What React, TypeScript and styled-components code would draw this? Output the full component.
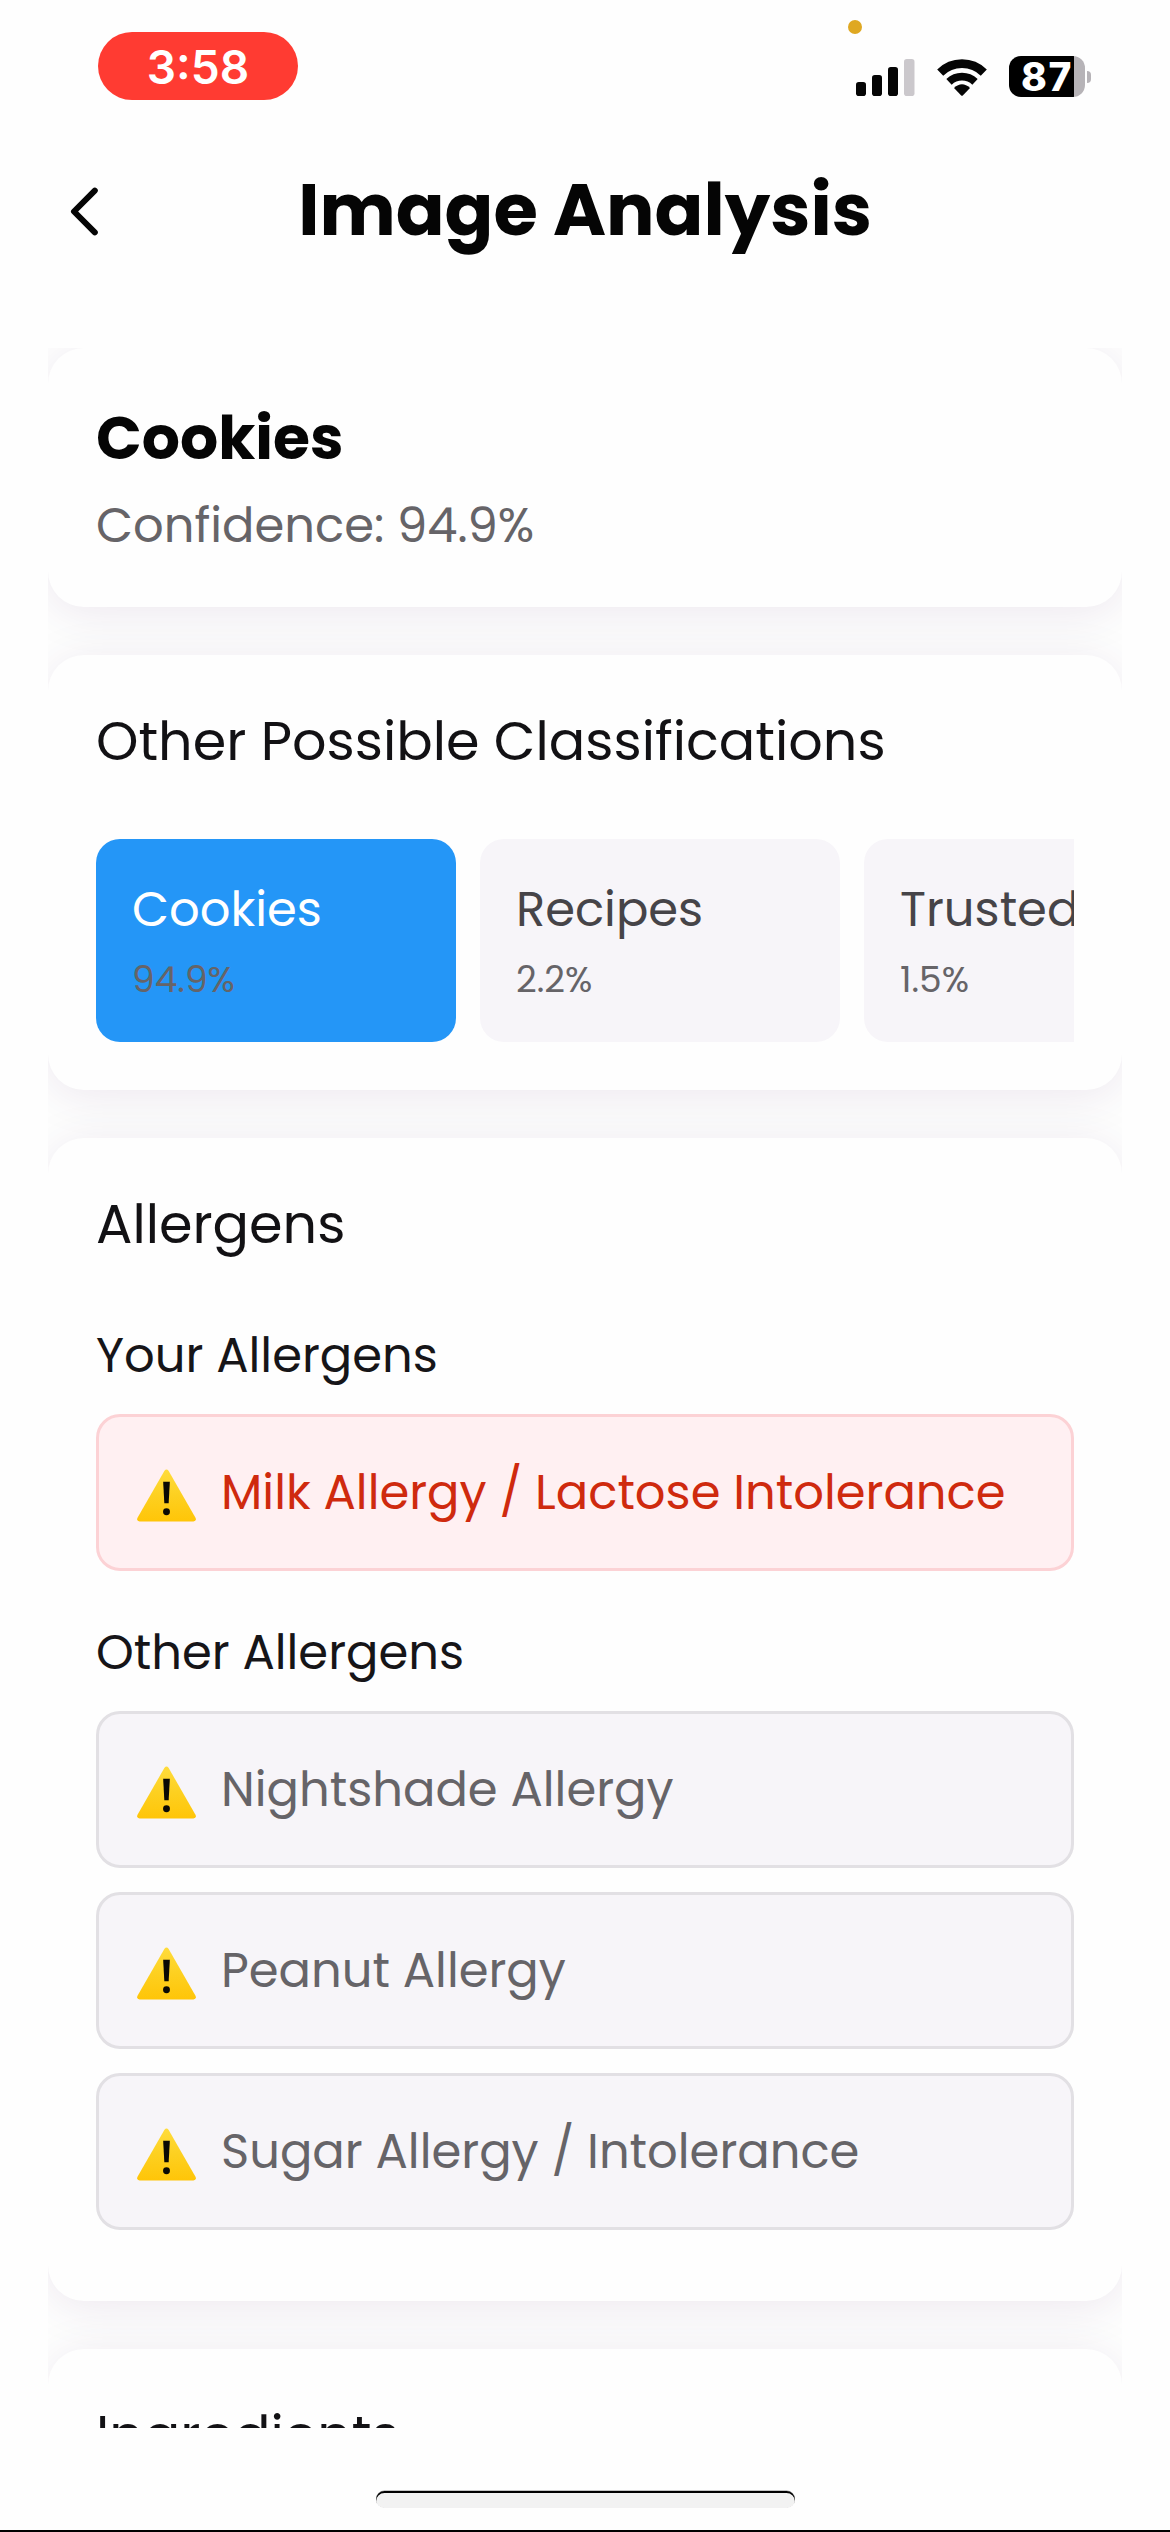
import React from "react";
import styled, { createGlobalStyle } from "styled-components";

const GlobalStyle = createGlobalStyle`
  * { box-sizing: border-box; }
  body {
    margin: 0;
    background: #fefefe;
    font-family: Poppins, Inter, "Open Sans", sans-serif;
    -webkit-font-smoothing: antialiased;
  }
`;

const Screen = styled.div`
  position: relative;
  display: flex;
  flex-direction: column;
  width: 1170px;
  height: 2532px;
  overflow: hidden;
  background: #fefefe;
`;

/* ---------- status bar ---------- */

const StatusBar = styled.div`
  display: flex;
  justify-content: space-between;
  align-items: flex-start;
  height: 130px;
  padding: 32px 79px 0 98px;
`;

const TimePill = styled.div`
  display: flex;
  align-items: center;
  justify-content: center;
  width: 200px;
  height: 68px;
  padding-top: 2px;
  border-radius: 34px;
  background: #ff3b32;
  color: #fff;
  font-family: Inter, sans-serif;
  font-size: 46px;
  font-weight: 600;
`;

const StatusIcons = styled.div`
  display: flex;
  align-items: flex-end;
  height: 65px;
`;

const SignalIcon = styled.svg`
  margin: 0 22px 1px 0;
`;

const WifiIcon = styled.svg`
  margin: 0 22px 1px 0;
`;

const Battery = styled.div`
  display: flex;
  align-items: center;
  gap: 2px;
`;

const BatteryBody = styled.div`
  display: flex;
  align-items: center;
  width: 76px;
  height: 41px;
  padding-left: 12px;
  border-radius: 12px;
  background: linear-gradient(90deg, #000 65px, #b6b3b7 65px);
  color: #fff;
  font-family: Inter, sans-serif;
  font-size: 39px;
  font-weight: 800;
  letter-spacing: 1.5px;
  line-height: 41px;
`;

const BatteryNub = styled.div`
  width: 4px;
  height: 12px;
  border-radius: 0 6px 6px 0;
  background: #b6b3b7;
`;

const MicDot = styled.div`
  position: absolute;
  left: 848px;
  top: 20px;
  width: 14px;
  height: 14px;
  border-radius: 50%;
  background: #dfa822;
`;

/* ---------- header ---------- */

const Header = styled.header`
  display: grid;
  grid-template-columns: 150px 1fr 150px;
  align-items: center;
  height: 160px;
  margin-bottom: 58px;
`;

const BackButton = styled.button`
  display: flex;
  padding: 2px 0 0 69px;
  border: 0;
  background: none;
`;

const ScreenTitle = styled.h1`
  margin: 0;
  text-align: center;
  font-size: 72px;
  font-weight: 700;
  line-height: 100px;
  color: #050505;
`;

/* ---------- scroll area and cards ---------- */

const ScrollArea = styled.main`
  display: flex;
  flex-direction: column;
  gap: 48px;
  height: 2080px;
  margin: 0 48px;
  overflow: hidden;
`;

const Card = styled.section<{ $height: number }>`
  flex: none;
  display: flex;
  flex-direction: column;
  height: ${(p) => p.$height}px;
  padding: 48px;
  border-radius: 36px;
  background: #fefefe;
  box-shadow: 0 6px 48px rgba(60, 10, 90, 0.095);
`;

const FoodName = styled.h2`
  margin: 0 0 11px;
  font-size: 60px;
  font-weight: 700;
  line-height: 84px;
  color: #050505;
`;

const Confidence = styled.p`
  margin: 0;
  font-size: 48px;
  line-height: 69px;
  color: #666468;
`;

const CardTitle = styled.h3`
  margin: 0;
  font-size: 54px;
  font-weight: 400;
  line-height: 76px;
  white-space: nowrap;
  color: #121114;
`;

const TileStrip = styled.div`
  display: flex;
  gap: 24px;
  margin-top: 60px;
  overflow: hidden;
`;

const Tile = styled.div<{ $active?: boolean }>`
  flex: none;
  width: 360px;
  height: 203px;
  padding: 36px;
  border-radius: 24px;
  background: ${(p) => (p.$active ? "#2496f7" : "#f7f5f9")};
  color: ${(p) => (p.$active ? "#fff" : "#464448")};
`;

const TileName = styled.div`
  font-size: 48px;
  line-height: 69px;
  white-space: nowrap;
`;

const TileScore = styled.div`
  margin-top: 9px;
  font-size: 36px;
  line-height: 54px;
  color: #666468;
`;

const Group = styled.div<{ $gap: number }>`
  display: flex;
  flex-direction: column;
  margin-top: ${(p) => p.$gap}px;
`;

const GroupTitle = styled.h4`
  margin: 0 0 22px;
  font-size: 48px;
  font-weight: 400;
  line-height: 72px;
  color: #161518;
`;

const AllergenList = styled.div`
  display: flex;
  flex-direction: column;
  gap: 24px;
`;

const AllergenRow = styled.div<{ $danger?: boolean }>`
  display: flex;
  align-items: center;
  gap: 24px;
  height: 157px;
  padding: 0 37px;
  border: 3px solid ${(p) => (p.$danger ? "#fcd2d5" : "#e2e0e4")};
  border-radius: 24px;
  background: ${(p) => (p.$danger ? "#fff0f2" : "#f7f5f9")};
  color: ${(p) => (p.$danger ? "#cf2a0e" : "#666468")};
  font-size: 48px;
  line-height: 72px;
  white-space: nowrap;
`;

const WarningSvg = styled.svg`
  flex: none;
  margin-top: 5px;
`;

/* ---------- bottom ---------- */

const Footer = styled.footer`
  display: flex;
  justify-content: center;
  height: 104px;
  padding-top: 63px;
  border-bottom: 2px solid #000;
`;

const HomeIndicator = styled.div`
  width: 419px;
  height: 17px;
  border-radius: 9px;
  background: #f2f2f2;
  box-shadow: inset 0 2px 0 #000, 0 -0.5px 0.5px #8a8a8a;
`;

function Signal() {
  return (
    <SignalIcon width="59" height="37" viewBox="0 0 59 37">
      <rect x="0" y="23" width="10" height="14" rx="2.8" fill="#050505" />
      <rect x="16" y="16" width="10" height="21" rx="2.8" fill="#050505" />
      <rect x="32" y="8" width="10" height="29" rx="2.8" fill="#050505" />
      <rect x="48" y="0" width="10.5" height="37" rx="2.8" fill="#cbc8cc" />
    </SignalIcon>
  );
}

function Wifi() {
  return (
    <WifiIcon width="50" height="37" viewBox="0 0 50 37" fill="none">
      <path d="M3.2 13.6A31 31 0 0 1 46.8 13.6" stroke="#050505" strokeWidth="8.6" />
      <path d="M12 22.8A19 19 0 0 1 38 22.8" stroke="#050505" strokeWidth="7.8" />
      <path d="M17 29Q25 21.5 33 29L25.8 36.4Q25 37.2 24.2 36.4Z" fill="#050505" />
    </WifiIcon>
  );
}

function Warning() {
  return (
    <WarningSvg width="61" height="53" viewBox="0 0 62 53">
      <defs>
        <linearGradient id="warn" x1="0" y1="0" x2="0" y2="1">
          <stop offset="0" stopColor="#ffdc3c" />
          <stop offset="0.5" stopColor="#fdd020" />
          <stop offset="1" stopColor="#ffc508" />
        </linearGradient>
      </defs>
      <path
        d="M28.8 1.6Q31-1.2 33.2 1.6L60.6 49.4Q61.6 52.6 58.4 52.8H3.6Q.4 52.6 1.4 49.4Z"
        fill="url(#warn)"
      />
      <path d="M27.6 12.5H34.4L33.2 34.5H28.8Z" fill="#0a0904" />
      <circle cx="31" cy="43" r="3.5" fill="#0a0904" />
    </WarningSvg>
  );
}

const tiles = [
  { name: "Cookies", score: "94.9%", active: true },
  { name: "Recipes", score: "2.2%" },
  { name: "Trusted", score: "1.5%" },
];

const otherAllergens = ["Nightshade Allergy", "Peanut Allergy", "Sugar Allergy / Intolerance"];

export default function App() {
  return (
    <Screen>
      <GlobalStyle />
      <MicDot />
      <StatusBar>
        <TimePill>3:58</TimePill>
        <StatusIcons>
          <Signal />
          <Wifi />
          <Battery>
            <BatteryBody>87</BatteryBody>
            <BatteryNub />
          </Battery>
        </StatusIcons>
      </StatusBar>

      <Header>
        <BackButton aria-label="Back">
          <svg width="30" height="50" viewBox="0 0 30 50" fill="none">
            <path
              d="M25.8 4.6L5 25.5L25.8 46.4"
              stroke="#050505"
              strokeWidth="6"
              strokeLinecap="round"
              strokeLinejoin="round"
            />
          </svg>
        </BackButton>
        <ScreenTitle>Image Analysis</ScreenTitle>
      </Header>

      <ScrollArea>
        <Card $height={259}>
          <FoodName>Cookies</FoodName>
          <Confidence>Confidence: 94.9%</Confidence>
        </Card>

        <Card $height={435}>
          <CardTitle>Other Possible Classifications</CardTitle>
          <TileStrip>
            {tiles.map((t) => (
              <Tile key={t.name} $active={t.active}>
                <TileName>{t.name}</TileName>
                <TileScore>{t.score}</TileScore>
              </Tile>
            ))}
          </TileStrip>
        </Card>

        <Card $height={1163}>
          <CardTitle>Allergens</CardTitle>
          <Group $gap={58}>
            <GroupTitle>Your Allergens</GroupTitle>
            <AllergenRow $danger>
              <Warning />
              Milk Allergy / Lactose Intolerance
            </AllergenRow>
          </Group>
          <Group $gap={46}>
            <GroupTitle>Other Allergens</GroupTitle>
            <AllergenList>
              {otherAllergens.map((name) => (
                <AllergenRow key={name}>
                  <Warning />
                  {name}
                </AllergenRow>
              ))}
            </AllergenList>
          </Group>
        </Card>

        <Card $height={300}>
          <CardTitle>Ingredients</CardTitle>
        </Card>
      </ScrollArea>

      <Footer>
        <HomeIndicator />
      </Footer>
    </Screen>
  );
}
